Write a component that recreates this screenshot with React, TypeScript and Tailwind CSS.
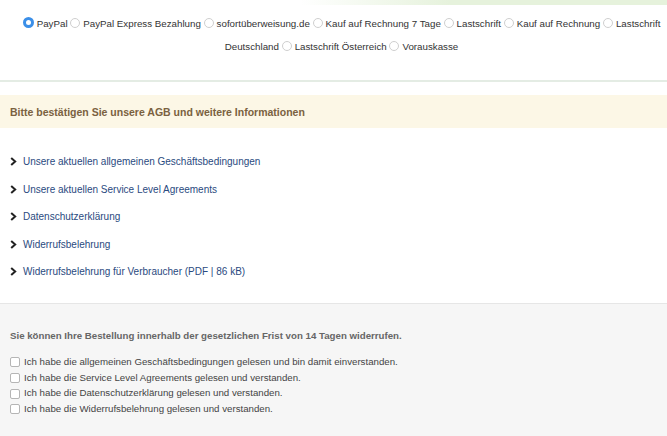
import React from "react";

const Radio = ({ checked = false }: { checked?: boolean }) =>
  checked ? (
    <span className="inline-block w-[11px] h-[11px] rounded-full bg-[#3b8fe8] border-[3px] border-[#3b8fe8] mr-[3px] align-[-1px]">
      <span className="block w-full h-full rounded-full bg-white" />
    </span>
  ) : (
    <span className="inline-block w-[10px] h-[10px] rounded-full border border-[#cfcfcf] bg-white mr-[3px] align-[-1px]" />
  );

const Chevron = () => (
  <svg width="7" height="9" viewBox="0 0 7 9" className="mr-[6px] shrink-0">
    <path d="M1.2 0.9 L5.2 4.5 L1.2 8.1" fill="none" stroke="#222" strokeWidth="2" />
  </svg>
);

const Check = () => (
  <span className="inline-block w-[10px] h-[10px] rounded-[2px] border border-[#b5b5b5] bg-white mr-[4px] shrink-0" />
);

export default function App() {
  const links = [
    "Unsere aktuellen allgemeinen Geschäftsbedingungen",
    "Unsere aktuellen Service Level Agreements",
    "Datenschutzerklärung",
    "Widerrufsbelehrung",
    "Widerrufsbelehrung für Verbraucher (PDF | 86 kB)",
  ];
  const checks = [
    "Ich habe die allgemeinen Geschäftsbedingungen gelesen und bin damit einverstanden.",
    "Ich habe die Service Level Agreements gelesen und verstanden.",
    "Ich habe die Datenschutzerklärung gelesen und verstanden.",
    "Ich habe die Widerrufsbelehrung gelesen und verstanden.",
  ];
  return (
    <div
      className="w-[667px] h-[436px] overflow-hidden bg-white flex flex-col text-[#333]"
      style={{ fontFamily: '"Liberation Sans", Arial, sans-serif' }}
    >
      <div className="flex h-[5px] shrink-0">
        <div className="w-[300px] bg-white" />
        <div className="w-[150px] bg-gradient-to-r from-white to-[#e6f2dc]" />
        <div className="flex-1 bg-[#e6f2dc]" />
      </div>
      <div className="pl-[20px] pr-[4px] pt-[7px] text-center text-[9.75px] leading-[23px] text-[#333] h-[75px] shrink-0 whitespace-nowrap">
        <div>
          <Radio checked />PayPal <Radio />PayPal Express Bezahlung <Radio />sofortüberweisung.de{" "}
          <Radio />Kauf auf Rechnung 7 Tage <Radio />Lastschrift <Radio />Kauf auf Rechnung{" "}
          <Radio />Lastschrift
        </div>
        <div>
          Deutschland <Radio />Lastschrift Österreich <Radio />Vorauskasse
        </div>
      </div>
      <div className="h-[2px] bg-[#e4ece4] shrink-0" />
      <div className="h-[13px] shrink-0" />
      <div className="h-[33px] bg-[#fcf7e6] flex items-center px-[10px] pt-[3px] shrink-0">
        <span className="text-[10.5px] font-bold text-[#7a6140]">
          Bitte bestätigen Sie unsere AGB und weitere Informationen
        </span>
      </div>
      <div className="flex flex-col pt-[20px] pl-[10px] h-[175px] shrink-0">
        {links.map((l) => (
          <div key={l} className="flex items-center h-[27.5px] text-[10px] text-[#2a4a80]">
            <Chevron />
            {l}
          </div>
        ))}
      </div>
      <div className="flex-1 bg-[#f6f6f6] border-t border-[#e6e6e6] px-[10px] pt-[25px]">
        <div className="text-[9.7px] font-bold text-[#666]">
          Sie können Ihre Bestellung innerhalb der gesetzlichen Frist von 14 Tagen widerrufen.
        </div>
        <div className="flex flex-col mt-[11px]">
          {checks.map((c) => (
            <div key={c} className="flex items-center h-[15.6px] text-[9.7px] text-[#444]">
              <Check />
              {c}
            </div>
          ))}
        </div>
      </div>
    </div>
  );
}
